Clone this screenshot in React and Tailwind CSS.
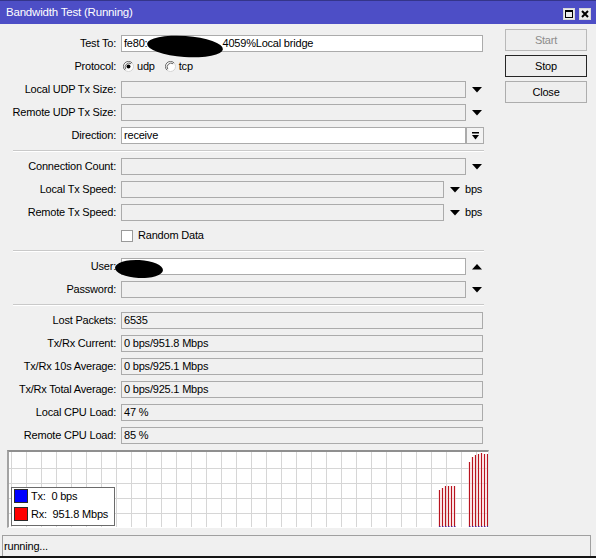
import React from "react";

const FONT = "font-['Liberation_Sans',Arial,sans-serif]";

function Down({ className = "" }) {
  return (
    <svg width="10" height="6" viewBox="0 0 10 6" className={className}>
      <polygon points="0,0 10,0 5,5.5" fill="#000" />
    </svg>
  );
}

function Up({ className = "" }) {
  return (
    <svg width="10" height="6" viewBox="0 0 10 6" className={className}>
      <polygon points="0,5.5 10,5.5 5,0" fill="#000" />
    </svg>
  );
}

function Radio({ checked }) {
  return (
    <svg width="11" height="11" viewBox="0 0 11 11" className="shrink-0">
      <circle cx="5.5" cy="5.5" r="5" fill="#fff" stroke="#d4d4d4" />
      <path d="M1.9 9.1 A5 5 0 0 1 9.1 1.9" stroke="#6f6f6f" fill="none" />
      <path d="M2.8 8.2 A3.9 3.9 0 0 1 8.2 2.8" stroke="#3c3c3c" fill="none" strokeWidth="0.8" />
      {checked && <circle cx="5.5" cy="5.5" r="2" fill="#000" />}
    </svg>
  );
}

function Row({ label, children, className = "" }) {
  return (
    <div className={`relative flex items-center h-[17px] ${className}`}>
      <div className="w-[116px] shrink-0 text-right whitespace-nowrap leading-[17px]">{label}</div>
      <div className="ml-[5px] flex items-center h-[17px]">{children}</div>
    </div>
  );
}

function Field({ w, white = false, children }) {
  return (
    <div
      className={`h-[17px] border border-[#ababab] pl-[2px] leading-[15px] whitespace-nowrap overflow-hidden ${
        white ? "bg-white" : "bg-[#f0f0f0]"
      } ${w}`}
    >
      {children}
    </div>
  );
}

function Sep() {
  return (
    <div className="ml-[13px] w-[471px] h-[2px] flex flex-col">
      <div className="h-px bg-[#c9c9c9]" />
      <div className="h-px bg-white" />
    </div>
  );
}

function Graph() {
  const vlines = [];
  for (let x = 2; x < 479; x += 15) vlines.push(x);
  const hlines = [16, 31, 46, 61];
  const bars = [
    [430, 38], [433, 36], [436, 34], [439, 34], [442, 34], [445, 34],
    [460, 10], [463, 5], [466, 3], [469, 2], [472, 1], [475, 2], [478, 2],
  ];
  return (
    <div className="relative ml-[7px] w-[482px] h-[78px] bg-white border-t-2 border-l-2 border-t-[#8f8f8f] border-l-[#a3a3a3] border-r border-b border-r-[#e6e6e6] border-b-white">
      <svg width="479" height="75" viewBox="0 0 479 75" className="block">
        {vlines.map((x) => (
          <line key={`v${x}`} x1={x + 0.5} y1="0" x2={x + 0.5} y2="75" stroke="#d6d6d6" />
        ))}
        {hlines.map((y) => (
          <line key={`h${y}`} x1="0" y1={y + 0.5} x2="479" y2={y + 0.5} stroke="#d6d6d6" />
        ))}
        {bars.map(([x, t]) => (
          <rect key={`p${x}`} x={x - 0.5} y={t} width="2" height={75 - t} fill="#f3c9cb" />
        ))}
        {bars.map(([x, t]) => (
          <line key={`b${x}`} x1={x + 0.5} y1={t} x2={x + 0.5} y2="75" stroke="#b8141f" />
        ))}
        {bars.map(([x]) => (
          <rect key={`d${x}`} x={x} y="74" width="1.5" height="1" fill="#4a2a9c" />
        ))}
      </svg>
      {/* legend overlay */}
      <div className="absolute left-[2px] top-[35px] w-[104px] h-[39px] bg-white border border-[#6b6b6b] pl-[2px] pt-px flex flex-col gap-[4px]">
        <div className="flex items-center h-[14px]">
          <div className="w-[14px] h-[14px] bg-[#0000ff] border border-[#2a2a2a]" />
          <span className="ml-[3px] whitespace-pre leading-[14px]">{"Tx:  0 bps"}</span>
        </div>
        <div className="flex items-center h-[14px]">
          <div className="w-[14px] h-[14px] bg-[#ff0000] border border-[#2a2a2a]" />
          <span className="ml-[3px] whitespace-pre leading-[14px]">{"Rx:  951.8 Mbps"}</span>
        </div>
      </div>
    </div>
  );
}

function TitleButton({ children }) {
  return (
    <div className="w-[12px] h-[12px] bg-[#ececec] border border-[#d8d8d8] flex items-center justify-center">
      {children}
    </div>
  );
}

export default function App() {
  return (
    <div
      className={`w-[596px] h-[558px] bg-[#f0f0f0] flex flex-col overflow-hidden text-[11px] tracking-[-0.2px] text-black ${FONT}`}
    >
      {/* title bar */}
      <div className="h-[24px] shrink-0 bg-[#4d4ec6] border-t border-t-[#34358a] flex items-center pl-[6px] pr-[5px]">
        <span className="text-white text-[11.5px] leading-none">Bandwidth Test (Running)</span>
        <div className="ml-auto flex items-center gap-[4px] mt-[2px]">
          <TitleButton>
            <div className="w-[8px] h-[8px] border border-black border-t-2" />
          </TitleButton>
          <TitleButton>
            <svg width="8" height="8" viewBox="0 0 8 8">
              <path d="M1 1 L7 7 M7 1 L1 7" stroke="#000" strokeWidth="2" />
            </svg>
          </TitleButton>
        </div>
      </div>

      {/* body */}
      <div className="flex flex-1">
        <div className="w-[505px] shrink-0 flex flex-col gap-[6px] pt-[11px]">
          <Row label="Test To:">
            <Field w="w-[362px]" white>
              fe80:<span className="inline-block w-[75px]" />4059%Local bridge
            </Field>
            <div className="absolute left-[147px] top-[1px] w-[76px] h-[21px] bg-black rounded-[50%] rotate-[4deg]" />
          </Row>

          <Row label="Protocol:">
            <div className="ml-[2px] flex items-center">
              <Radio checked />
              <span className="ml-[3px]">udp</span>
              <div className="ml-[10px]">
                <Radio />
              </div>
              <span className="ml-[3px]">tcp</span>
            </div>
          </Row>

          <Row label="Local UDP Tx Size:">
            <Field w="w-[345px]" />
            <Down className="ml-[6px]" />
          </Row>

          <Row label="Remote UDP Tx Size:">
            <Field w="w-[345px]" />
            <Down className="ml-[6px]" />
          </Row>

          <Row label="Direction:">
            <Field w="w-[345px]" white>
              receive
            </Field>
            <div className="w-[18px] h-[17px] border border-[#ababab] bg-[#f3f3f3] flex items-center justify-center">
              <svg width="7" height="8" viewBox="0 0 7 8">
                <rect x="0" y="0" width="7" height="1.5" fill="#000" />
                <polygon points="0,3 7,3 3.5,7.5" fill="#000" />
              </svg>
            </div>
          </Row>

          <Sep />

          <Row label="Connection Count:">
            <Field w="w-[345px]" />
            <Down className="ml-[6px]" />
          </Row>

          <Row label="Local Tx Speed:">
            <Field w="w-[323px]" />
            <Down className="ml-[6px]" />
            <span className="ml-[5px]">bps</span>
          </Row>

          <Row label="Remote Tx Speed:">
            <Field w="w-[323px]" />
            <Down className="ml-[6px]" />
            <span className="ml-[5px]">bps</span>
          </Row>

          <Row label="">
            <div className="w-[12px] h-[12px] bg-white border border-[#9a9a9a]" />
            <span className="ml-[5px]">Random Data</span>
          </Row>

          <Sep />

          <Row label="User:">
            <Field w="w-[345px]" white />
            <Up className="ml-[6px]" />
            <div className="absolute left-[115px] top-[2px] w-[48px] h-[18px] bg-black rounded-[50%] rotate-[3deg]" />
          </Row>

          <Row label="Password:">
            <Field w="w-[345px]" />
            <Down className="ml-[6px]" />
          </Row>

          <Sep />

          <Row label="Lost Packets:">
            <Field w="w-[362px]">6535</Field>
          </Row>
          <Row label="Tx/Rx Current:">
            <Field w="w-[362px]">0 bps/951.8 Mbps</Field>
          </Row>
          <Row label="Tx/Rx 10s Average:">
            <Field w="w-[362px]">0 bps/925.1 Mbps</Field>
          </Row>
          <Row label="Tx/Rx Total Average:">
            <Field w="w-[362px]">0 bps/925.1 Mbps</Field>
          </Row>
          <Row label="Local CPU Load:">
            <Field w="w-[362px]">47 %</Field>
          </Row>
          <Row label="Remote CPU Load:">
            <Field w="w-[362px]">85 %</Field>
          </Row>

          <Graph />
        </div>

        {/* action buttons */}
        <div className="w-[82px] flex flex-col gap-[4px] pt-[5px]">
          <div className="h-[22px] border border-[#b9b9b9] bg-[#eeeeee] flex items-center justify-center text-[#8c8c8c]">
            Start
          </div>
          <div className="h-[22px] border border-[#262626] bg-[#eeeeee] flex items-center justify-center">
            Stop
          </div>
          <div className="h-[22px] border border-[#adadad] bg-[#eeeeee] flex items-center justify-center">
            Close
          </div>
        </div>
      </div>

      {/* status bar */}
      <div className="ml-[2px] w-[589px] h-[21px] shrink-0 border-t border-l border-r border-[#a0a0a0] flex items-center pl-px">
        running...
      </div>
      <div className="h-[2px] shrink-0 bg-[#151515]" />
    </div>
  );
}
